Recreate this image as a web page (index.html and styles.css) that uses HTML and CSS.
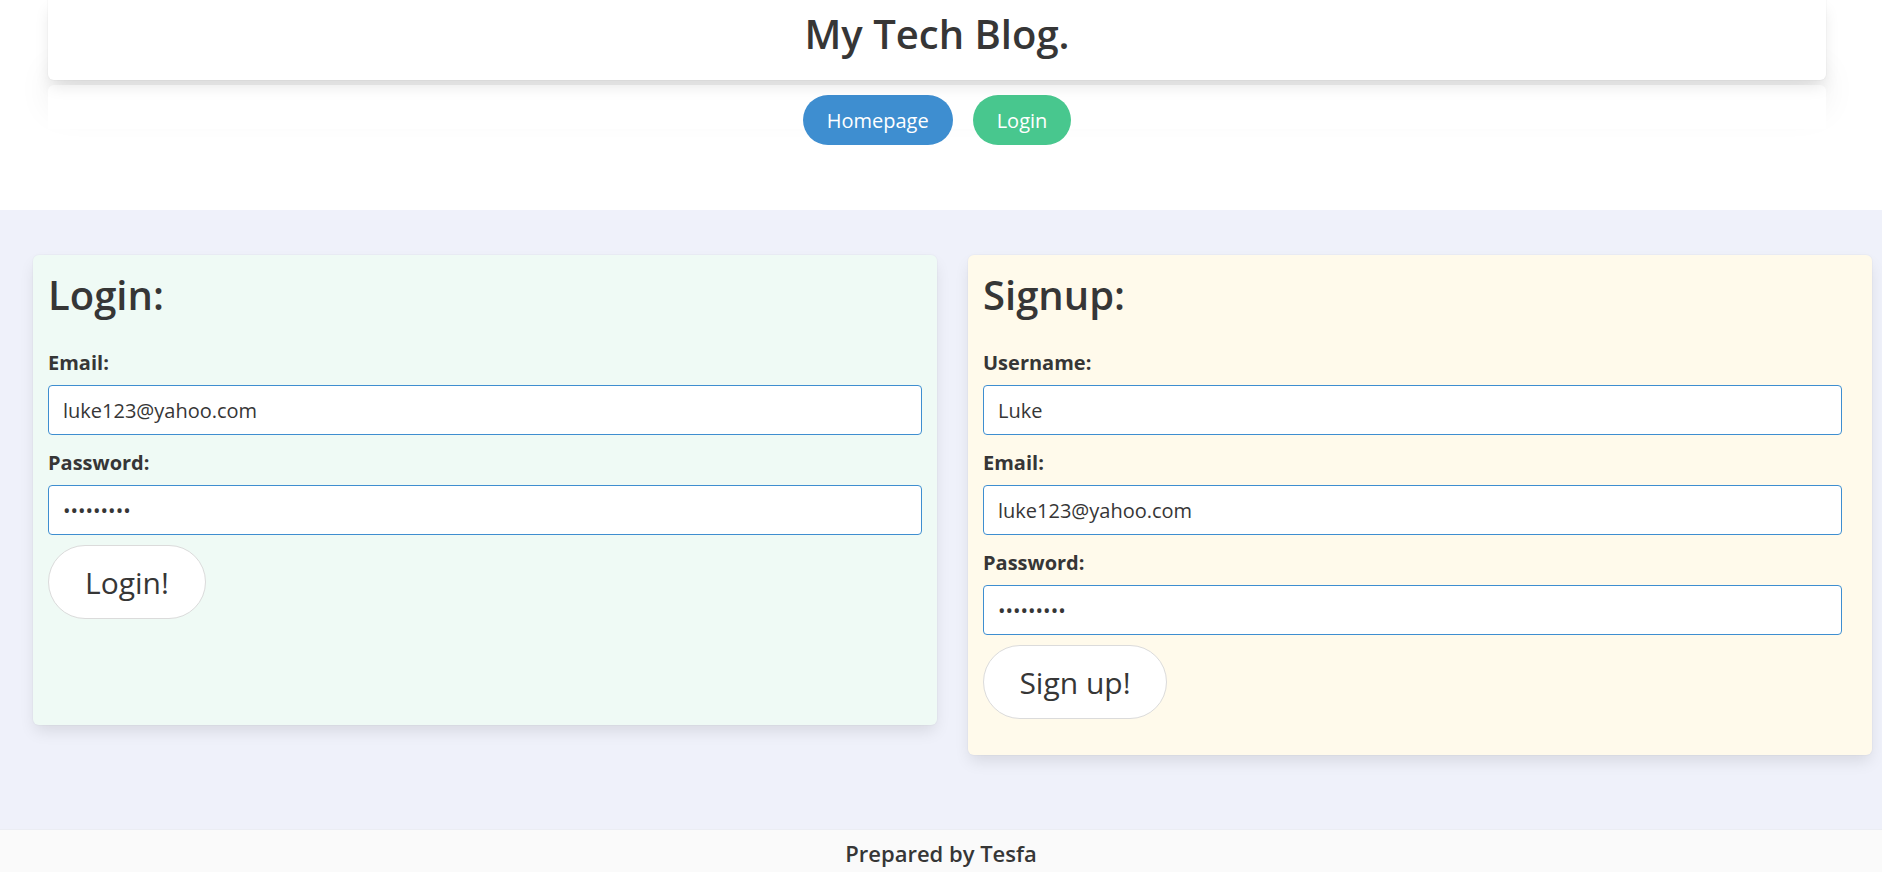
FILE: index.html
```html
<!DOCTYPE html>
<html lang="en">
<head>
<meta charset="utf-8">
<title>My Tech Blog.</title>
<link rel="stylesheet" href="styles.css">
</head>
<body>
<header class="site-header">
  <div class="title-box">
    <h1 class="site-title">My Tech Blog.</h1>
  </div>
  <nav class="nav-box">
    <a class="pill pill-blue" href="#">Homepage</a>
    <a class="pill pill-green" href="#">Login</a>
  </nav>
</header>

<main class="main-section">
  <section class="card card-login">
    <h2 class="card-title">Login:</h2>
    <form class="form">
      <div class="field">
        <label class="label">Email:</label>
        <input class="input" type="email" value="luke123@yahoo.com">
      </div>
      <div class="field">
        <label class="label">Password:</label>
        <input class="input" type="password" value="123456789">
      </div>
      <button class="big-btn btn-login" type="button">Login!</button>
    </form>
  </section>

  <section class="card card-signup">
    <h2 class="card-title">Signup:</h2>
    <form class="form">
      <div class="field">
        <label class="label">Username:</label>
        <input class="input" type="text" value="Luke">
      </div>
      <div class="field">
        <label class="label">Email:</label>
        <input class="input" type="email" value="luke123@yahoo.com">
      </div>
      <div class="field">
        <label class="label">Password:</label>
        <input class="input" type="password" value="123456789">
      </div>
      <button class="big-btn btn-signup" type="button">Sign up!</button>
    </form>
  </section>
</main>

<footer class="site-footer">
  <p class="footer-text">Prepared by Tesfa</p>
</footer>
</body>
</html>
```

FILE: styles.css
```css
* {
  box-sizing: border-box;
}

html, body {
  margin: 0;
  padding: 0;
}

body {
  font-family: "Open Sans", "Noto Sans", "Liberation Sans", sans-serif;
  color: #363636;
  background: #ffffff;
}

.site-header {
  height: 210px;
  padding: 0 56px 0 48px;
}

.title-box {
  position: relative;
  z-index: 2;
  height: 80px;
  padding-top: 11px;
  background: #fff;
  border-radius: 0 0 6px 6px;
  box-shadow: 0 0.5em 1em -0.125em rgba(10, 10, 10, 0.1), 0 0 0 1px rgba(10, 10, 10, 0.02);
}

.site-title {
  margin: 0;
  text-align: center;
  font-size: 40px;
  line-height: 45px;
  font-weight: 600;
  color: #363636;
}

.nav-box {
  margin-top: 5px;
  height: 44px;
  padding-top: 10px;
  background: #fff;
  border-radius: 6px 6px 0 0;
  box-shadow: 0 -18px 36px -4px rgba(10, 10, 10, 0.09);
  display: flex;
  justify-content: center;
  align-items: flex-start;
  gap: 20px;
  position: relative;
  z-index: 1;
}

.pill {
  display: inline-flex;
  align-items: center;
  justify-content: center;
  height: 50px;
  padding: 0 24px;
  border-radius: 9999px;
  color: #fff;
  font-size: 20px;
  text-decoration: none;
  flex-shrink: 0;
}

.pill-blue {
  background: #3e8ed0;
}

.pill-green {
  background: #48c78e;
}

.main-section {
  background: #eff1fa;
  padding: 45px 10px 74px 33px;
  display: flex;
  align-items: flex-start;
  gap: 31px;
}

.card {
  flex: 0 0 904px;
  border-radius: 6px;
  box-shadow: 0 0.5em 1em -0.125em rgba(10, 10, 10, 0.1), 0 0 0 1px rgba(10, 10, 10, 0.02);
  padding: 17px 15px 36px 15px;
}

.card-login {
  background: #effaf5;
  padding-bottom: 106px;
}

.card-signup {
  background: #fffaeb;
  padding-right: 30px;
}

.card-title {
  margin: 0 0 28px 0;
  font-size: 40px;
  line-height: 45px;
  font-weight: 600;
  color: #363636;
}

.form {
  display: flex;
  flex-direction: column;
  align-items: flex-start;
  gap: 10px;
}

.field {
  width: 100%;
  display: flex;
  flex-direction: column;
  gap: 7px;
}

.label {
  padding-top: 3px;
  font-size: 20px;
  line-height: 30px;
  font-weight: 700;
  color: #363636;
}

.input {
  width: 100%;
  height: 50px;
  border: 1px solid #3e8ed0;
  border-radius: 4px;
  background: #fff;
  padding: 0 14px;
  font-family: inherit;
  font-size: 20px;
  color: #363636;
  outline: none;
}

.big-btn {
  height: 74px;
  padding-top: 2px;
  border: 1px solid #dbdbdb;
  border-radius: 9999px;
  background: #fff;
  color: #363636;
  font-family: inherit;
  font-size: 30px;
  line-height: 1;
  cursor: pointer;
}

.btn-login {
  width: 158px;
}

.btn-signup {
  width: 184px;
}

.site-footer {
  background: #fafafa;
  padding: 7px 0 40px;
  border-top: 1px solid #ebedf3;
}

.footer-text {
  margin: 0;
  text-align: center;
  font-size: 22px;
  line-height: 33px;
  font-weight: 600;
  color: #363636;
}
```
